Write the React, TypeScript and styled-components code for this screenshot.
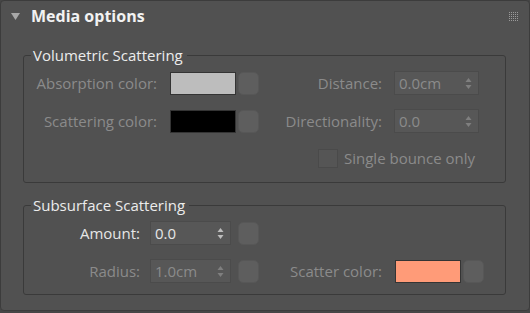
import React from "react";
import styled, { createGlobalStyle } from "styled-components";

const Global = createGlobalStyle`
  html, body { margin: 0; padding: 0; background: #464646; }
  body { font-family: "Open Sans", "Noto Sans", sans-serif; }
`;

const Panel = styled.div`
  box-sizing: border-box;
  width: 530px;
  height: 311px;
  background: #515151;
  border: 1px solid #3c3c3c;
  border-radius: 4px;
  display: flex;
  flex-direction: column;
`;

const Header = styled.div`
  display: flex;
  align-items: center;
  height: 30px;
  padding: 0 11px 0 10px;
`;

const Caret = styled.svg`
  width: 9px;
  height: 7px;
  margin-right: 11px;
`;

const Title = styled.div`
  flex: 1;
  color: #f2f2f2;
  font-weight: 700;
  font-size: 16px;
`;

const Grip = styled.svg`
  width: 9px;
  height: 9px;
`;

const Body = styled.div`
  display: flex;
  flex-direction: column;
  gap: 12px;
  padding: 14px 23px 0 22px;
`;

const Group = styled.fieldset<{ $pb: number }>`
  margin: 0;
  padding: 6px 0 ${(p) => p.$pb}px 0;
  border: 1px solid #3a3a3a;
  border-radius: 3px;
  display: flex;
  flex-direction: column;
  gap: 14px;
`;

const Legend = styled.legend`
  color: #ececec;
  font-size: 15px;
  padding: 0 4px 0 2px;
  margin-left: 7px;
  line-height: 20px;
`;

const Row = styled.div<{ $h?: number }>`
  display: flex;
  align-items: center;
  height: ${(p) => p.$h ?? 24}px;
`;

const Label = styled.div<{ $w: number; $pad?: number; $on?: boolean }>`
  box-sizing: border-box;
  width: ${(p) => p.$w}px;
  padding-right: ${(p) => p.$pad ?? 13}px;
  text-align: right;
  font-size: 15px;
  color: ${(p) => (p.$on ? "#e6e6e6" : "#8b8b8b")};
  white-space: nowrap;
`;

const Swatch = styled.div<{ $c: string }>`
  box-sizing: border-box;
  width: 66px;
  height: 23px;
  background: ${(p) => p.$c};
  border: 1px solid #343434;
`;

const MapBtn = styled.div<{ $gap?: number }>`
  box-sizing: border-box;
  width: 21px;
  height: 23px;
  margin-left: ${(p) => p.$gap ?? 2}px;
  background: #5e5e5e;
  border: 1px solid #575757;
  border-radius: 5px;
`;

const Spinner = styled.div<{ $w: number; $on?: boolean }>`
  box-sizing: border-box;
  width: ${(p) => p.$w}px;
  height: 24px;
  background: #575757;
  border: 1px solid #4b4b4b;
  display: flex;
  align-items: center;
  padding: 0 6px 0 4px;
  font-size: 15px;
  color: ${(p) => (p.$on ? "#e6e6e6" : "#8b8b8b")};
`;

const SpinValue = styled.span`
  flex: 1;
`;

const Arrows = styled.svg`
  width: 7px;
  height: 13px;
`;

const Check = styled.div`
  box-sizing: border-box;
  width: 20px;
  height: 19px;
  margin-left: 294px;
  background: #555555;
  border: 1px solid #4a4a4a;
  margin-right: 6px;
`;

const CheckText = styled.span`
  font-size: 15px;
  color: #8b8b8b;
`;

const Spin = ({ w, v, on }: { w: number; v: string; on?: boolean }) => (
  <Spinner $w={w} $on={on}>
    <SpinValue>{v}</SpinValue>
    <Arrows viewBox="0 0 7 13">
      <path d="M3.5 1 L6.5 5 L0.5 5 Z" fill={on ? "#bdbdbd" : "#7f7f7f"} />
      <path d="M0.5 8 L6.5 8 L3.5 12 Z" fill={on ? "#bdbdbd" : "#7f7f7f"} />
    </Arrows>
  </Spinner>
);

export default function App() {
  const dots = [];
  for (let r = 0; r < 5; r++)
    for (let c = 0; c < 5; c++)
      dots.push(<rect key={`${r}-${c}`} x={c * 2} y={r * 2} width={1} height={1} fill="#9a9a9a" />);
  return (
    <>
      <Global />
      <Panel>
        <Header>
          <Caret viewBox="0 0 9 7">
            <path d="M0 0 L9 0 L4.5 7 Z" fill="#a8a8a8" />
          </Caret>
          <Title>Media options</Title>
          <Grip viewBox="0 0 9 9">{dots}</Grip>
        </Header>
        <Body>
          <Group $pb={13}>
            <Legend>Volumetric Scattering</Legend>
            <Row>
              <Label $w={146}>Absorption color:</Label>
              <Swatch $c="#bdbdbd" />
              <MapBtn />
              <Label $w={135} $pad={12}>Distance:</Label>
              <Spin w={85} v="0.0cm" />
            </Row>
            <Row>
              <Label $w={146}>Scattering color:</Label>
              <Swatch $c="#000000" />
              <MapBtn />
              <Label $w={135} $pad={12}>Directionality:</Label>
              <Spin w={85} v="0.0" />
            </Row>
            <Row $h={22}>
              <Check />
              <CheckText>Single bounce only</CheckText>
            </Row>
          </Group>
          <Group $pb={11}>
            <Legend>Subsurface Scattering</Legend>
            <Row>
              <Label $w={126} $pad={10} $on>Amount:</Label>
              <Spin w={81} v="0.0" on />
              <MapBtn $gap={7} />
            </Row>
            <Row>
              <Label $w={126} $pad={10}>Radius:</Label>
              <Spin w={81} v="1.0cm" />
              <MapBtn $gap={7} />
              <Label $w={136}>Scatter color:</Label>
              <Swatch $c="#ff9b78" />
              <MapBtn />
            </Row>
          </Group>
        </Body>
      </Panel>
    </>
  );
}
